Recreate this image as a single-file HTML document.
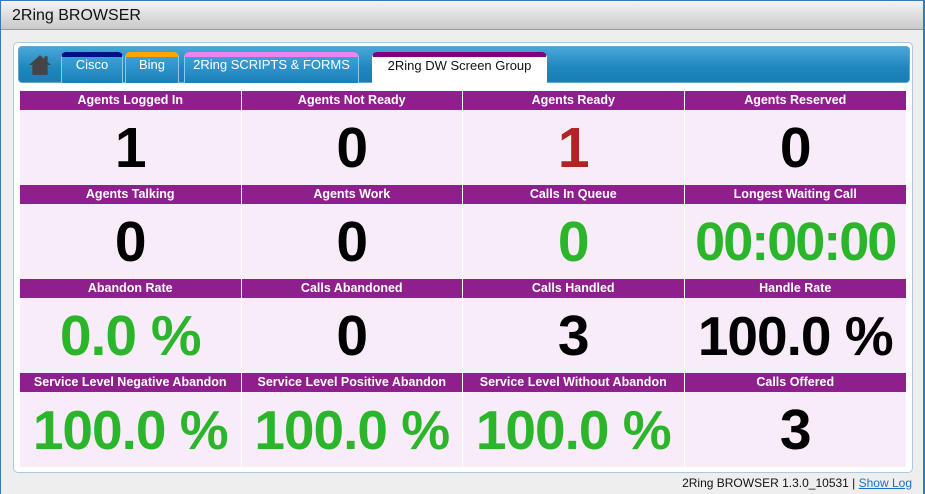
<!DOCTYPE html>
<html><head><style>
*{margin:0;padding:0;box-sizing:border-box}
body{width:925px;height:494px;background:#3a78b8;font-family:"Liberation Sans",Arial,sans-serif;overflow:hidden;position:relative}
#win{position:absolute;left:1px;top:1px;width:922px;height:493px;background:#eeeeee}
#title{height:29px;background:linear-gradient(#f4f4f4,#c9c9c9);border-bottom:1px solid #999;font-size:16px;padding:6px 0 0 11px;color:#111}
#panel{position:absolute;left:12px;top:41px;width:900px;height:431px;background:#fff;border:1px solid #a9c9e2;border-radius:5px}
#tabs{position:absolute;left:4px;top:3px;width:892px;height:37px;background:linear-gradient(#4aa8d8,#1e86bf 60%,#1a7db4);border-radius:4px;border:1px solid #5fa7cf}
.tab{position:absolute;top:5px;height:31px;border:1px solid #8ecae8;border-bottom:none;border-radius:5px 5px 0 0;background:linear-gradient(#3aa2d8,#1b7fb7);color:#fff;font-size:13px;text-align:center;padding-top:0px;border-top-width:5px}
.home{position:absolute;left:9px;top:7px}
#grid{position:absolute;left:6px;top:48px;width:886px}
.row{display:flex}
.c{width:221.5px;border-right:1px solid #fff}
.c:last-child{border-right:none}
.h{height:19px;background:#8e1f8c;color:#fff;font-weight:bold;text-align:center;line-height:19px;white-space:nowrap;font-family:"Liberation Sans",sans-serif;font-size:12.5px}
.v{height:75px;background:#f9ecf9;text-align:center;font-weight:bold;font-size:57px;line-height:77px;letter-spacing:-1px}
.g{color:#2bb52b}.r{color:#b42323}.k{color:#000}
.p{font-size:55px}
#foot{position:absolute;right:11px;top:475px;font-size:12px;color:#111}
#foot a{color:#1a6fc4;text-decoration:underline}
</style></head><body>
<div id="win">
<div id="title">2Ring BROWSER</div>
<div id="panel">
<div id="tabs">
<svg class="home" width="24" height="22" viewBox="0 0 22 20"><path d="M11 1 L1 10 H4 V19 H18 V10 H21 Z" fill="#444"/><rect x="15" y="2" width="3" height="6" fill="#444"/></svg>
<div class="tab" style="left:42px;width:62px;border-top-color:#000e8a">Cisco</div>
<div class="tab" style="left:106px;width:54px;border-top-color:#ffa500">Bing</div>
<div class="tab" style="left:165px;width:175px;border-top-color:#ee82ee">2Ring SCRIPTS &amp; FORMS</div>
<div class="tab" style="left:353px;width:175px;background:#fff;color:#111;border-color:#fff;border-top-color:#800080;padding-top:1px">2Ring DW Screen Group</div>
</div>
<div id="grid">
<div class="row"><div class="c"><div class="h">Agents Logged In</div><div class="v k">1</div></div><div class="c"><div class="h">Agents Not Ready</div><div class="v k">0</div></div><div class="c"><div class="h">Agents Ready</div><div class="v r">1</div></div><div class="c"><div class="h">Agents Reserved</div><div class="v k">0</div></div></div>
<div class="row"><div class="c"><div class="h">Agents Talking</div><div class="v k">0</div></div><div class="c"><div class="h">Agents Work</div><div class="v k">0</div></div><div class="c"><div class="h">Calls In Queue</div><div class="v g">0</div></div><div class="c"><div class="h">Longest Waiting Call</div><div class="v g" style="letter-spacing:-2px;font-size:54px">00:00:00</div></div></div>
<div class="row"><div class="c"><div class="h">Abandon Rate</div><div class="v g">0.0 %</div></div><div class="c"><div class="h">Calls Abandoned</div><div class="v k">0</div></div><div class="c"><div class="h">Calls Handled</div><div class="v k">3</div></div><div class="c"><div class="h">Handle Rate</div><div class="v k p">100.0 %</div></div></div>
<div class="row"><div class="c"><div class="h">Service Level Negative Abandon</div><div class="v g p">100.0 %</div></div><div class="c"><div class="h">Service Level Positive Abandon</div><div class="v g p">100.0 %</div></div><div class="c"><div class="h">Service Level Without Abandon</div><div class="v g p">100.0 %</div></div><div class="c"><div class="h">Calls Offered</div><div class="v k">3</div></div></div>
</div>
</div>
<div id="foot">2Ring BROWSER 1.3.0_10531 | <a>Show Log</a></div>
</div>
</body></html>
